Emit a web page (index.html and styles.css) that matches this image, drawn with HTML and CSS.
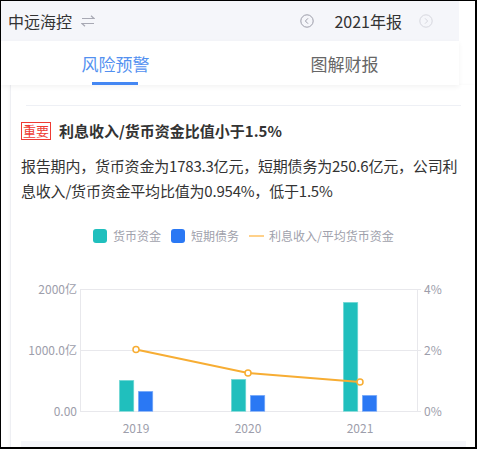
FILE: index.html
```html
<!DOCTYPE html>
<html lang="zh">
<head>
<meta charset="utf-8">
<link rel="stylesheet" href="styles.css">
</head>
<body>
<div class="frame">
  <div class="header">
    <span class="company">中远海控</span>
    <svg class="swap" width="14" height="12" viewBox="0 0 14 12"><path d="M1 3.5H13L10 0.8M13 8.5H1L4 11.2" fill="none" stroke="#a8a9b4" stroke-width="1.2"/></svg>
    <span class="spacer"></span>
    <svg class="nav" width="14" height="14" viewBox="0 0 14 14"><circle cx="7" cy="7" r="6.2" fill="none" stroke="#9b9ca8" stroke-width="1"/><path d="M8 4.3L5.4 7L8 9.7" fill="none" stroke="#9b9ca8" stroke-width="1"/></svg>
    <span class="year">2021年报</span>
    <svg class="nav next" width="14" height="14" viewBox="0 0 14 14"><circle cx="7" cy="7" r="6.2" fill="none" stroke="#d6d7de" stroke-width="1"/><path d="M6 4.3L8.6 7L6 9.7" fill="none" stroke="#d6d7de" stroke-width="1"/></svg>
  </div>
  <div class="tabs">
    <div class="tab active">风险预警</div>
    <div class="tab">图解财报</div>
  </div>
  <div class="card">
    <div class="divider"></div>
    <div class="title-row">
      <span class="tag">重要</span>
      <span class="title">利息收入/货币资金比值小于1.5%</span>
    </div>
    <p class="desc">报告期内，货币资金为1783.3亿元，短期债务为250.6亿元，公司利息收入/货币资金平均比值为0.954%，低于1.5%</p>
    <svg class="chart" width="454" height="220" viewBox="21 220 454 220">
      <rect x="93" y="228" width="14" height="14" rx="3" fill="#20bfbd"/>
      <text x="113" y="240" class="lg">货币资金</text>
      <rect x="171" y="228" width="14" height="14" rx="3" fill="#2a78f4"/>
      <text x="191" y="240" class="lg">短期债务</text>
      <line x1="249" y1="235" x2="264" y2="235" stroke="#ffd18a" stroke-width="2"/>
      <text x="269" y="240" class="lg">利息收入/平均货币资金</text>

      <g stroke="#e8e8ec" stroke-width="1">
        <line x1="80" y1="288.5" x2="417" y2="288.5"/>
        <line x1="80" y1="349.5" x2="417" y2="349.5"/>
        <line x1="80" y1="410.5" x2="417" y2="410.5"/>
        <line x1="80.5" y1="288" x2="80.5" y2="411"/>
        <line x1="417.5" y1="288" x2="417.5" y2="411"/>
        <line x1="417" y1="288.5" x2="421" y2="288.5"/>
        <line x1="417" y1="349.5" x2="421" y2="349.5"/>
        <line x1="417" y1="410.5" x2="421" y2="410.5"/>
      </g>
      <g class="ax" text-anchor="end">
        <text x="77" y="293">2000亿</text>
        <text x="77" y="354">1000.0亿</text>
        <text x="77" y="415">0.00</text>
      </g>
      <g class="ax">
        <text x="424" y="293">4%</text>
        <text x="424" y="354">2%</text>
        <text x="424" y="415">0%</text>
      </g>
      <g fill="#20bfbd" stroke="#7fdcd9" stroke-width="0.6">
        <rect x="119.3" y="379.3" width="14.5" height="31"/>
        <rect x="231.3" y="378.3" width="14.5" height="32"/>
        <rect x="343.3" y="301.3" width="14.5" height="109"/>
      </g>
      <g fill="#2a78f4" stroke="#86b2fa" stroke-width="0.6">
        <rect x="138.3" y="390.3" width="14.5" height="20"/>
        <rect x="250.3" y="394.3" width="14.5" height="16"/>
        <rect x="362.3" y="394.3" width="14.5" height="16"/>
      </g>
      <polyline points="136,348.5 248,372 360,381" fill="none" stroke="#f7ad33" stroke-width="2"/>
      <g fill="#fff" stroke="#f7ad33" stroke-width="1.5">
        <circle cx="136" cy="348.5" r="3"/>
        <circle cx="248" cy="372" r="3"/>
        <circle cx="360" cy="381" r="3"/>
      </g>
      <g class="ax" text-anchor="middle">
        <text x="136" y="432">2019</text>
        <text x="248" y="432">2020</text>
        <text x="360" y="432">2021</text>
      </g>
    </svg>
    <div class="footer-block"></div>
  </div>
</div>
</body>
</html>
```

FILE: styles.css
```css
html, body {
  margin: 0;
  padding: 0;
  background: #fff;
}
.frame {
  width: 477px;
  height: 449px;
  box-sizing: border-box;
  border: 1px solid #000;
  border-right-width: 2px;
  border-bottom-width: 2px;
  overflow: hidden;
  background: #fff;
  font-family: "Noto Sans CJK SC", "Noto Sans", sans-serif;
  color: #333;
}
.header {
  width: 458px;
  height: 40px;
  box-sizing: border-box;
  background: #f5f6fa;
  display: flex;
  align-items: center;
  padding: 0 26px 0 7px;
}
.company {
  font-size: 16px;
  line-height: 20px;
  color: #333;
}
.swap {
  margin-left: 9px;
}
.spacer {
  flex: 1;
}
.year {
  font-size: 16px;
  line-height: 20px;
  color: #333;
  margin: 0 17px 0 20px;
}
.tabs {
  position: relative;
  z-index: 1;
  width: 458px;
  height: 44px;
  display: flex;
  background: #fff;
  box-shadow: 0 2px 5px rgba(0, 0, 0, 0.05);
}
.tab {
  flex: 1;
  position: relative;
  text-align: center;
  font-size: 17px;
  line-height: 44px;
  padding-top: 1px;
  box-sizing: border-box;
  color: #666;
}
.tab.active {
  color: #5290f0;
}
.tab.active::after {
  content: "";
  position: absolute;
  left: 50%;
  bottom: 0;
  width: 46px;
  height: 3px;
  margin-left: -24px;
  background: #4487f3;
}
.card {
  margin-left: 9px;
  border-left: 1px solid #eeeff3;
  box-shadow: -1px 0 3px rgba(0, 0, 0, 0.03);
  padding-left: 10px;
  height: 365px;
}
.divider {
  margin: 0 0 0 5px;
  padding-top: 19px;
  width: 435px;
  height: 1px;
  border-bottom: 1px solid #eef0f5;
  box-sizing: content-box;
}
.title-row {
  display: flex;
  align-items: center;
  margin-top: 16px;
  height: 18px;
}
.tag {
  box-sizing: border-box;
  height: 18px;
  padding: 0 1px;
  border: 1px solid #ee3b33;
  color: #ee3b33;
  font-size: 13px;
  line-height: 16px;
  width: 30px;
  text-align: center;
}
.title {
  margin-left: 8px;
  font-size: 15px;
  font-weight: bold;
  color: #333;
  line-height: 18px;
}
.desc {
  margin: 13px 0 0 0;
  width: 450px;
  font-size: 15px;
  line-height: 25px;
  letter-spacing: -0.2px;
  color: #333;
}
.chart {
  display: block;
  margin-top: 18px;
}
.chart text {
  font-family: "Noto Sans CJK SC", "Noto Sans", sans-serif;
}
.lg {
  font-size: 12px;
  fill: #a0a1ac;
}
.ax text {
  font-size: 12px;
  fill: #9d9eab;
}
.footer-block {
  width: 445px;
  height: 8px;
  background: #f5f6fa;
}
```
